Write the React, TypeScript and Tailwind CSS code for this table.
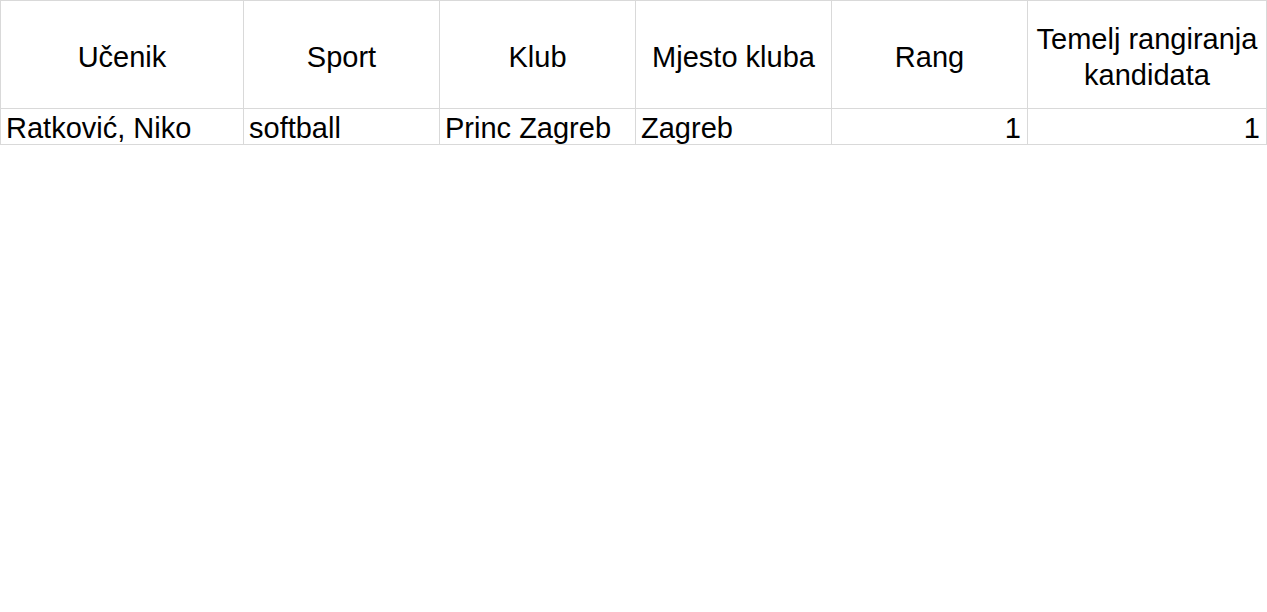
export default function App() {
  const headers = [
    "Učenik",
    "Sport",
    "Klub",
    "Mjesto kluba",
    "Rang",
    "Temelj rangiranja kandidata",
  ];
  const row = [
    { v: "Ratković, Niko", right: false },
    { v: "softball", right: false },
    { v: "Princ Zagreb", right: false },
    { v: "Zagreb", right: false },
    { v: "1", right: true },
    { v: "1", right: true },
  ];

  return (
    <div
      className="min-h-screen bg-white text-black"
      style={{ fontFamily: '"Liberation Sans", Arial, sans-serif' }}
    >
      <div className="grid grid-cols-[243px_196px_196px_196px_196px_239px] border-t border-l border-[#d9d9d9] text-[29px]">
        {/* header row */}
        {headers.map((h) => (
          <div
            key={h}
            className="h-[108px] flex items-center justify-center text-center border-r border-b border-[#d9d9d9] px-1 pt-[4px] leading-[36px]"
          >
            {h}
          </div>
        ))}

        {/* data row */}
        {row.map((c, i) => (
          <div
            key={i}
            className={`h-[36px] flex items-end border-r border-b border-[#d9d9d9] leading-[31px] whitespace-nowrap ${
              c.right ? "justify-end pr-[6px]" : "justify-start pl-[5px]"
            }`}
          >
            {c.v}
          </div>
        ))}
      </div>
    </div>
  );
}
